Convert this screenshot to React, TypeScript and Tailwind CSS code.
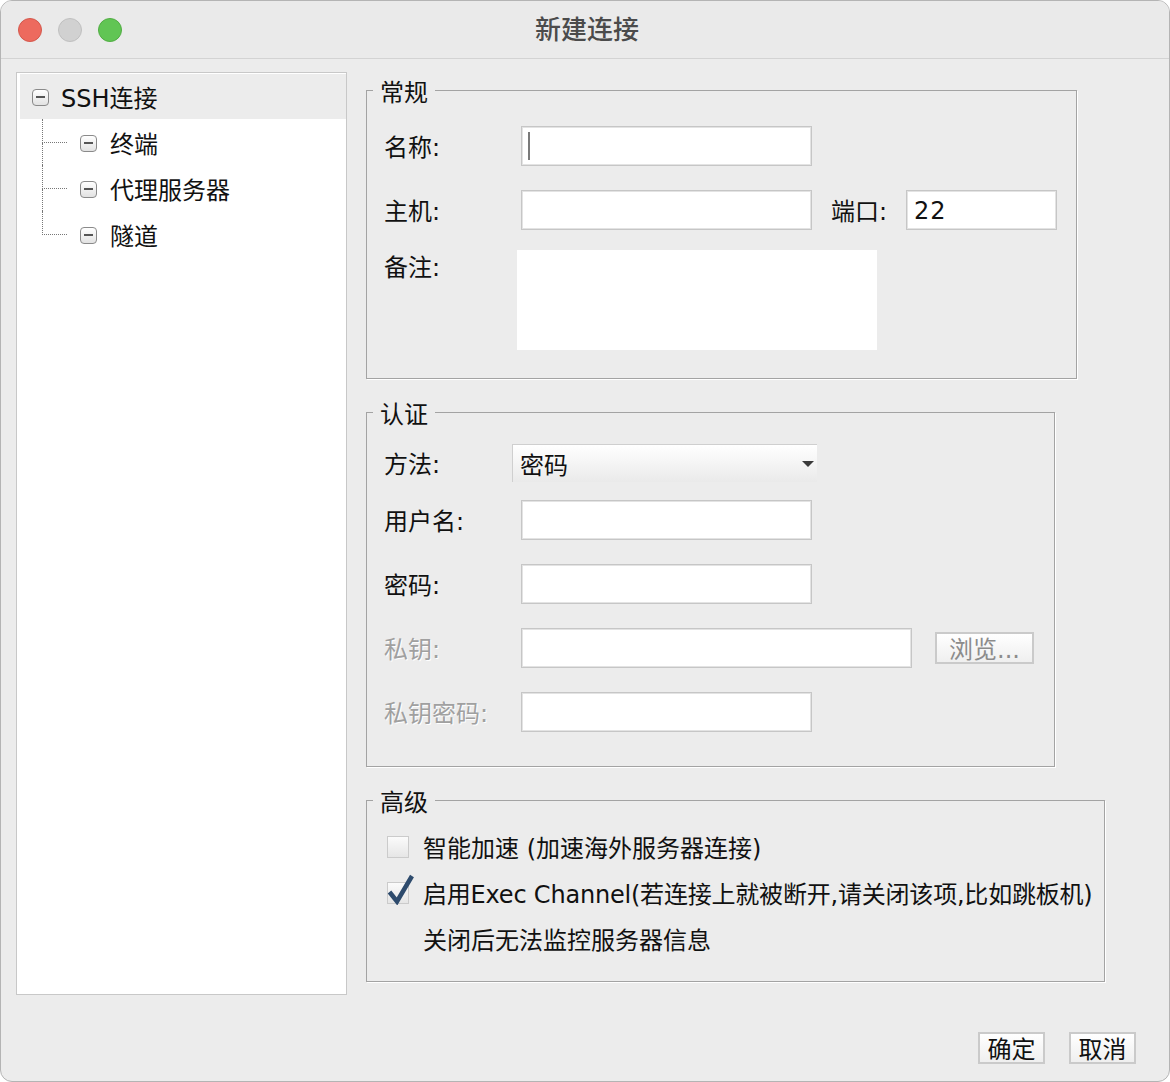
import React from "react";

const font = "font-['DejaVu_Sans','Noto_Sans_CJK_SC',sans-serif]";

function Input({ className, children }: { className: string; children?: React.ReactNode }) {
  return (
    <div
      className={`h-[40px] shrink-0 bg-white border border-[#c6c6c6] shadow-[inset_0_0_0_1px_#e3e3e3] flex items-center pl-[8px] ${className}`}
    >
      {children}
    </div>
  );
}

function Group({ title, className, children }: { title: string; className: string; children: React.ReactNode }) {
  return (
    <fieldset className={`border border-[#a3a3a3] shadow-[1px_1px_0_#fff] ${className}`}>
      <legend className="ml-[6px] px-[7px] text-[24px] leading-[24px] text-[#111]">
        <span className="relative top-[3px]">{title}</span>
      </legend>
      {children}
    </fieldset>
  );
}

function ExpandIcon() {
  return (
    <div className="w-[17px] h-[17px] shrink-0 rounded-[4px] border-[1.5px] border-[#8a8a8a] bg-gradient-to-b from-white to-[#e2e2e2] flex items-center justify-center">
      <div className="w-[9px] h-[1.5px] bg-[#555]" />
    </div>
  );
}

function TreeChild({ label, last }: { label: string; last?: boolean }) {
  return (
    <div className="flex items-center h-[46px] ml-[22px]">
      <div className="w-[25px] h-full flex flex-col shrink-0">
        <div className="h-[24px] border-l border-b border-dotted border-[#777]" />
        <div className={`h-[22px] ${last ? "" : "border-l border-dotted border-[#777]"}`} />
      </div>
      <div className="ml-[13px] pt-[2px]">
        <ExpandIcon />
      </div>
      <span className="ml-[13px] pt-[5px] text-[24px] leading-[28px] text-[#111]">{label}</span>
    </div>
  );
}

function Checkbox({ checked }: { checked?: boolean }) {
  return (
    <div className="relative w-[22px] h-[22px] shrink-0 border border-[#cbcbcb] bg-gradient-to-b from-[#fbfbfb] to-[#e6e6e6]">
      {checked && (
        <svg className="absolute left-[-1px] top-[-10px]" width="28" height="32" viewBox="0 0 28 32">
          <path d="M2.5 19 L10 28.5 L25 3" fill="none" stroke="#2e4b6d" strokeWidth="4.5" strokeLinejoin="miter" />
        </svg>
      )}
    </div>
  );
}

function Btn({ label, className, disabled }: { label: string; className: string; disabled?: boolean }) {
  return (
    <div
      className={`h-[32px] flex items-center justify-center pt-[3px] border-2 border-[#cacaca] bg-gradient-to-b from-white to-[#efefef] text-[24px] leading-[28px] ${
        disabled ? "text-[#8c8c8c]" : "text-[#111]"
      } ${className}`}
    >
      {label}
    </div>
  );
}

const label = "w-[137px] shrink-0 pt-[4px]";
const dim = "text-[#a0a0a0] [text-shadow:1px_1px_0_#fff]";

export default function App() {
  return (
    <div className={`w-[1170px] h-[1082px] bg-white ${font}`}>
      <div className="w-full h-full rounded-[12px] border border-[#b4b4b4] bg-[#ececec] overflow-hidden flex flex-col">
        {/* title bar */}
        <div className="h-[58px] shrink-0 bg-[#eaeaea] border-b border-[#d3d3d3] flex items-center">
          <div className="flex items-center gap-[16px] pl-[17px] pt-[1px]">
            <div className="w-[24px] h-[24px] rounded-full bg-[#ed6a5e] border border-[#d4584c]" />
            <div className="w-[24px] h-[24px] rounded-full bg-[#d1d1d1] border border-[#c0c0c0]" />
            <div className="w-[24px] h-[24px] rounded-full bg-[#61c554] border border-[#51ad43]" />
          </div>
          <div className="flex-1 flex justify-center pr-[117px] pb-[3px]">
            <span className="text-[26px] leading-[30px] font-medium text-[#4b4b4b] font-['Noto_Sans_CJK_SC',sans-serif]">
              新建连接
            </span>
          </div>
        </div>

        {/* body */}
        <div className="flex pl-[15px] mt-[13px]">
          <div className="w-[331px] h-[923px] shrink-0 bg-white border border-[#c8c8c8] pt-[1px] pl-[3px]">
            <div className="h-[45px] bg-[#ececec] flex items-center pl-[12px]">
              <div className="pt-[1px]">
                <ExpandIcon />
              </div>
              <span className="ml-[12px] pt-[4px] text-[24px] leading-[28px] text-[#111]">SSH连接</span>
            </div>
            <div>
              <TreeChild label="终端" />
              <TreeChild label="代理服务器" />
              <TreeChild label="隧道" last />
            </div>
          </div>

          <div className="ml-[19px] mt-[6px] flex flex-col text-[24px] leading-[28px] text-[#111]">
            <Group title="常规" className="w-[711px]">
              <div className="pt-[24px] pb-[28px] pl-[17px] flex flex-col">
                <div className="flex items-center h-[40px]">
                  <span className={label}>名称:</span>
                  <Input className="w-[291px]">
                    <div className="w-[2px] h-[28px] bg-[#7a7a7a] -ml-[2px]" />
                  </Input>
                </div>
                <div className="flex items-center h-[40px] mt-[24px]">
                  <span className={label}>主机:</span>
                  <Input className="w-[291px]" />
                  <span className="ml-[19px] w-[75px] shrink-0 pt-[4px]">端口:</span>
                  <Input className="w-[151px]">
                    <span className="-ml-[1px] pt-[2px] tracking-[1px]">22</span>
                  </Input>
                </div>
                <div className="flex items-start mt-[20px]">
                  <span className="w-[133px] shrink-0 mt-[4px]">备注:</span>
                  <div className="w-[360px] h-[100px] bg-white" />
                </div>
              </div>
            </Group>

            <Group title="认证" className="w-[689px] mt-[21px]">
              <div className="pt-[20px] pb-[34px] pl-[17px] flex flex-col">
                <div className="flex items-center h-[38px]">
                  <span className="w-[128px] shrink-0 pt-[4px]">方法:</span>
                  <div className="w-[305px] h-[38px] border-t border-l border-[#cfcfcf] bg-gradient-to-b from-white to-[#eaeaea] flex items-center pl-[7px] pr-[3px]">
                    <span className="flex-1 pt-[4px]">密码</span>
                    <svg width="12" height="8" viewBox="0 0 12 8">
                      <path d="M0 1 H12 L6 7 Z" fill="#3a3a3a" />
                    </svg>
                  </div>
                </div>
                <div className="flex items-center h-[40px] mt-[18px]">
                  <span className={label}>用户名:</span>
                  <Input className="w-[291px]" />
                </div>
                <div className="flex items-center h-[40px] mt-[24px]">
                  <span className={label}>密码:</span>
                  <Input className="w-[291px]" />
                </div>
                <div className="flex items-center h-[40px] mt-[24px]">
                  <span className={`${label} ${dim}`}>私钥:</span>
                  <Input className="w-[391px]" />
                  <Btn label="浏览..." disabled className="ml-[23px] w-[99px]" />
                </div>
                <div className="flex items-center h-[40px] mt-[24px]">
                  <span className={`${label} ${dim}`}>私钥密码:</span>
                  <Input className="w-[291px]" />
                </div>
              </div>
            </Group>

            <Group title="高级" className="w-[739px] mt-[21px]">
              <div className="pt-[12px] pb-[19px] pl-[20px] flex flex-col">
                <div className="flex items-center h-[46px]">
                  <Checkbox />
                  <span className="ml-[14px] pt-[4px]">智能加速 (加速海外服务器连接)</span>
                </div>
                <div className="flex items-center h-[46px]">
                  <Checkbox checked />
                  <span className="ml-[14px] pt-[4px] tracking-[-0.2px]">
                    启用Exec Channel(若连接上就被断开,请关闭该项,比如跳板机)
                  </span>
                </div>
                <div className="flex items-center h-[46px]">
                  <span className="ml-[36px] pt-[4px]">关闭后无法监控服务器信息</span>
                </div>
              </div>
            </Group>
          </div>
        </div>

        <div className="flex justify-end gap-[24px] pr-[33px] mt-[37px]">
          <Btn label="确定" className="w-[67px]" />
          <Btn label="取消" className="w-[67px]" />
        </div>
      </div>
    </div>
  );
}
